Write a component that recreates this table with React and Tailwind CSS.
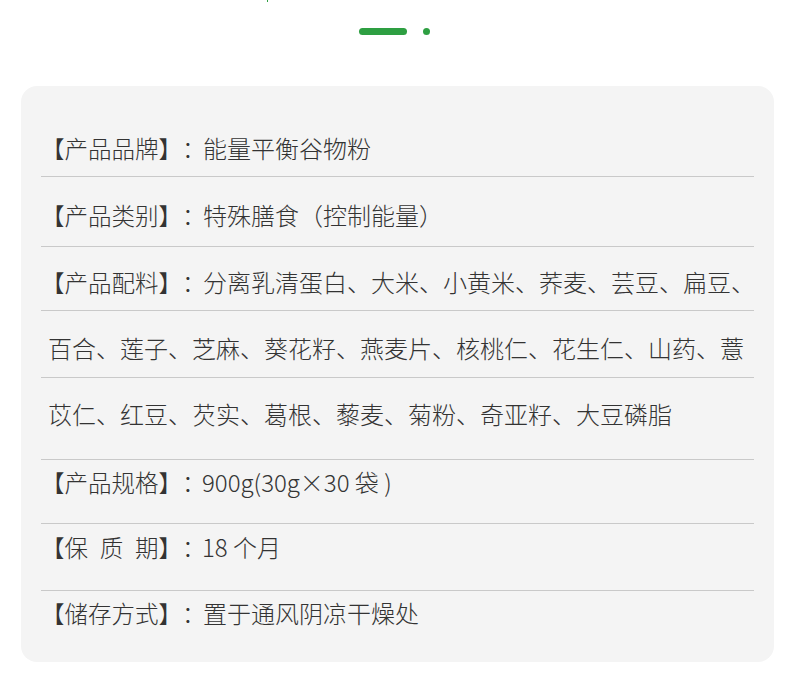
export default function App() {
  const font = { fontFamily: '"Noto Sans CJK SC", "Noto Sans", sans-serif' };
  const Label = ({ children, w = "w-[162px]" }) => (
    <span className={`inline-block ${w} text-[23.5px] overflow-visible`}>{children}</span>
  );
  return (
    <div className="w-[790px] h-[683px] bg-white overflow-hidden" style={font}>
      <div className="h-[86px] relative">
        <div className="absolute left-[267px] top-0 w-px h-[2px] bg-[#2e9f42]" />
        <div className="flex items-center pt-[28px] pl-[359px] gap-[16px]">
          <div className="w-[48px] h-[7px] rounded-full bg-[#2e9f42]" />
          <div className="w-[7px] h-[7px] rounded-full bg-[#2e9f42]" />
        </div>
      </div>
      <div className="ml-[21px] w-[753px] h-[576px] bg-[#f4f4f4] rounded-[16px] px-[20px] text-[24px] leading-[24px] font-light text-[#333333] whitespace-nowrap [text-spacing-trim:space-all]">
        <div className="pt-[50px] pb-[16px] border-b border-[#c9c9c9]"><Label>【产品品牌】：</Label>能量平衡谷物粉</div>
        <div className="pt-[26px] pb-[19px] border-b border-[#c9c9c9]"><Label>【产品类别】：</Label>特殊膳食（控制能量）</div>
        <div className="pt-[23px] pb-[16px] border-b border-[#c9c9c9]"><Label>【产品配料】：</Label>分离乳清蛋白、大米、小黄米、荞麦、芸豆、扁豆、</div>
        <div className="pt-[25px] pb-[17px] pl-[7px] border-b border-[#c9c9c9]">百合、莲子、芝麻、葵花籽、燕麦片、核桃仁、花生仁、山药、薏</div>
        <div className="pt-[24px] pb-[33px] pl-[7px] border-b border-[#c9c9c9]">苡仁、红豆、芡实、葛根、藜麦、菊粉、奇亚籽、大豆磷脂</div>
        <div className="pt-[10px] pb-[29px] border-b border-[#c9c9c9]"><Label w="w-[161px]">【产品规格】：</Label>900g(30g×30 袋 )</div>
        <div className="pt-[11px] pb-[31px] border-b border-[#c9c9c9]"><Label w="w-[161px]">【保{"\u2002"}质{"\u2002"}期】：</Label>18 个月</div>
        <div className="pt-[10px]"><Label>【储存方式】：</Label>置于通风阴凉干燥处</div>
      </div>
    </div>
  );
}
